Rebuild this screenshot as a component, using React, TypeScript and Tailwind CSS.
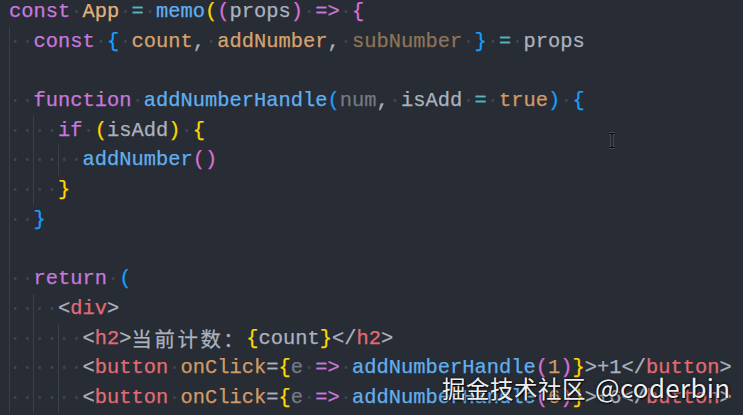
import React from "react";

type Tok = [string, string];

const kw = "text-[#c678dd]";
const fn = "text-[#61afef]";
const op = "text-[#56b6c2]";
const cn = "text-[#e2b27a]";
const vr = "text-[#d8a26e]";
const vrDim = "text-[#8e7459]";
const tx = "text-[#abb2bf]";
const dim = "text-[#747a85]";
const num = "text-[#d19a66]";
const tag = "text-[#e06c75]";
const b1 = "text-[#ffd700]";
const b2 = "text-[#da70d6]";
const b3 = "text-[#179fff]";

type LineDef = { guides: number; toks: Tok[] };

const lines: LineDef[] = [
  {
    guides: 0,
    toks: [
      ["const ", kw],
      ["App ", cn],
      ["= ", op],
      ["memo", fn],
      ["(", b1],
      ["(", b2],
      ["props", tx],
      [") ", b2],
      ["=> ", kw],
      ["{", b2],
    ],
  },
  {
    guides: 1,
    toks: [
      ["const ", kw],
      ["{ ", b3],
      ["count", vr],
      [", ", tx],
      ["addNumber", vr],
      [", ", tx],
      ["subNumber ", vrDim],
      ["} ", b3],
      ["= ", op],
      ["props", tx],
    ],
  },
  { guides: 1, toks: [] },
  {
    guides: 1,
    toks: [
      ["function ", kw],
      ["addNumberHandle", fn],
      ["(", b3],
      ["num", dim],
      [", ", tx],
      ["isAdd ", tx],
      ["= ", op],
      ["true", num],
      [") ", b3],
      ["{", b3],
    ],
  },
  {
    guides: 2,
    toks: [
      ["if ", kw],
      ["(", b1],
      ["isAdd", tx],
      [") ", b1],
      ["{", b1],
    ],
  },
  {
    guides: 3,
    toks: [
      ["addNumber", fn],
      ["()", b2],
    ],
  },
  { guides: 2, toks: [["}", b1]] },
  { guides: 1, toks: [["}", b3]] },
  { guides: 1, toks: [] },
  {
    guides: 1,
    toks: [
      ["return ", kw],
      ["(", b3],
    ],
  },
  {
    guides: 2,
    toks: [
      ["<", tx],
      ["div", tag],
      [">", tx],
    ],
  },
  {
    guides: 3,
    toks: [
      ["<", tx],
      ["h2", tag],
      [">", tx],
      ["当前计数：", "cjk"],
      ["{", b1],
      ["count", tx],
      ["}", b1],
      ["</", tx],
      ["h2", tag],
      [">", tx],
    ],
  },
  {
    guides: 3,
    toks: [
      ["<", tx],
      ["button ", tag],
      ["onClick", num],
      ["=", tx],
      ["{", b1],
      ["e ", dim],
      ["=> ", kw],
      ["addNumberHandle", fn],
      ["(", b2],
      ["1", num],
      [")", b2],
      ["}", b1],
      [">+1</", tx],
      ["button", tag],
      [">", tx],
    ],
  },
  {
    guides: 3,
    toks: [
      ["<", tx],
      ["button ", tag],
      ["onClick", num],
      ["=", tx],
      ["{", b1],
      ["e ", dim],
      ["=> ", kw],
      ["addNumberHandle", fn],
      ["(", b2],
      ["6", num],
      [")", b2],
      ["}", b1],
      [">+6</", tx],
      ["button", tag],
      [">", tx],
    ],
  },
];

const Token = ({ text, color }: { text: string; color: string }) => {
  if (color === "cjk") {
    return (
      <span className="font-['Noto_Sans_CJK_SC',sans-serif] tracking-[2.6px] text-[#abb2bf]">
        {text}
      </span>
    );
  }
  return (
    <span className={color}>
      {text.split("").map((ch, i) =>
        ch === " " ? (
          <span key={i} className="text-[#3f444f] [-webkit-text-stroke:0]">
            ·
          </span>
        ) : (
          ch
        )
      )}
    </span>
  );
};

const CodeLine = ({ guides, toks }: LineDef) => {
  const empty = toks.length === 0;
  return (
    <div className="flex h-[29.7px] leading-[29.7px] whitespace-pre">
      {Array.from({ length: guides }).map((_, i) => (
        <span
          key={i}
          className="w-[2ch] shadow-[inset_1px_0_0_#3a3f4a] text-[#3f444f] [-webkit-text-stroke:0]"
        >
          {empty ? "" : "··"}
        </span>
      ))}
      {toks.map(([text, color], i) => (
        <Token key={i} text={text} color={color} />
      ))}
    </div>
  );
};

export default function App() {
  return (
    <div className="relative w-[743px] h-[415px] overflow-hidden bg-[#282c34] font-['Liberation_Mono',monospace] text-[20.4px] [-webkit-text-stroke:0.25px_currentColor]">
      <div className="pl-[9px] -mt-[3px]">
        {lines.map((l, i) => (
          <CodeLine key={i} guides={l.guides} toks={l.toks} />
        ))}
      </div>

      {/* text cursor */}
      <svg
        className="absolute left-[607px] top-[132px]"
        width="10"
        height="17"
        viewBox="0 0 10 17"
      >
        <path
          d="M2 1.5h6M5 1.5v14M2 15.5h6"
          stroke="#ffffff"
          strokeOpacity="0.25"
          strokeWidth="3"
          fill="none"
        />
        <path
          d="M2 1.5h6M5 1.5v14M2 15.5h6"
          stroke="#0b0c0e"
          strokeWidth="1.3"
          fill="none"
        />
      </svg>

      {/* watermark */}
      <div className="absolute left-[442px] top-[367px] flex items-baseline gap-[9px] text-[#eeeeee] font-['Noto_Sans_CJK_SC',sans-serif] [-webkit-text-stroke:0] [text-shadow:0_0_3px_rgba(0,0,0,0.9),1px_1px_1px_rgba(0,0,0,0.7)]">
        <span className="text-[23.5px] tracking-[0.5px]">掘金技术社区</span>
        <span className="text-[26px] tracking-[0.3px]">@coderbin</span>
      </div>
    </div>
  );
}
